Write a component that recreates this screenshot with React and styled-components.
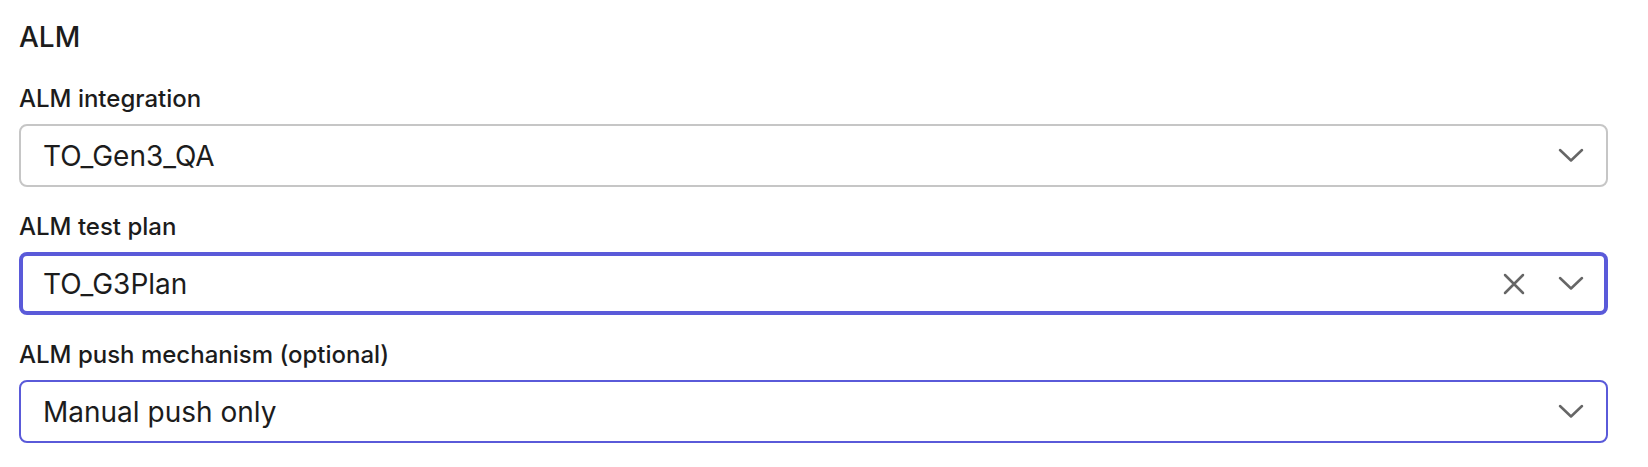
import React from 'react';
import styled, { createGlobalStyle } from 'styled-components';

const GlobalStyle = createGlobalStyle`
  html, body {
    margin: 0;
    padding: 0;
    background: #ffffff;
  }
  body {
    font-family: Inter, "Noto Sans", "Liberation Sans", sans-serif;
    color: #1c1c1c;
  }
`;

const Section = styled.section`
  padding: 19px 40px 0 19px;
`;

const Heading = styled.h2`
  margin: 0 0 28px;
  font-size: 28px;
  line-height: 36px;
  font-weight: 450;
  color: #1c1c1c;
`;

const Fields = styled.div`
  display: flex;
  flex-direction: column;
  gap: 24px;
`;

const Field = styled.div`
  display: flex;
  flex-direction: column;
  gap: 9px;
`;

const Label = styled.label`
  font-size: 24px;
  line-height: 32px;
  font-weight: 450;
  color: #1c1c1c;
`;

const Control = styled.div`
  box-sizing: border-box;
  height: 63px;
  display: flex;
  align-items: center;
  gap: 25px;
  padding: 0 ${props => 21 - props.$border}px 0 ${props => 24 - props.$border}px;
  border: ${props => props.$border}px solid ${props => props.$color};
  border-radius: 8px;
  background: #fff;
`;

const Value = styled.span`
  flex: 1;
  font-size: 28px;
  line-height: 34px;
  color: #1c1c1c;
`;

const IconButton = styled.span`
  width: 32px;
  height: 32px;
  display: flex;
  align-items: center;
  justify-content: center;
  color: #666666;
`;

const Chevron = () => (
  <svg width="26" height="15" viewBox="0 0 26 15" fill="none">
    <path d="M2 2 L13 12.5 L24 2" stroke="currentColor" strokeWidth="2.5" strokeLinecap="round" strokeLinejoin="round" />
  </svg>
);

const Cross = () => (
  <svg width="22" height="22" viewBox="0 0 22 22" fill="none">
    <path d="M2 2 L20 20 M20 2 L2 20" stroke="currentColor" strokeWidth="2.5" strokeLinecap="round" />
  </svg>
);

const borders = {
  idle: { width: 2, color: '#c6c6c6' },
  focused: { width: 4, color: '#5a5ad9' },
  active: { width: 2, color: '#5a5ad9' },
};

function Select({ label, value, state = 'idle', clearable }) {
  const b = borders[state];
  return (
    <Field>
      <Label>{label}</Label>
      <Control $border={b.width} $color={b.color}>
        <Value>{value}</Value>
        {clearable && (
          <IconButton>
            <Cross />
          </IconButton>
        )}
        <IconButton>
          <Chevron />
        </IconButton>
      </Control>
    </Field>
  );
}

export default function App() {
  return (
    <>
      <GlobalStyle />
      <Section>
        <Heading>ALM</Heading>
        <Fields>
          <Select label="ALM integration" value="TO_Gen3_QA" />
          <Select label="ALM test plan" value="TO_G3Plan" state="focused" clearable />
          <Select label="ALM push mechanism (optional)" value="Manual push only" state="active" />
        </Fields>
      </Section>
    </>
  );
}
